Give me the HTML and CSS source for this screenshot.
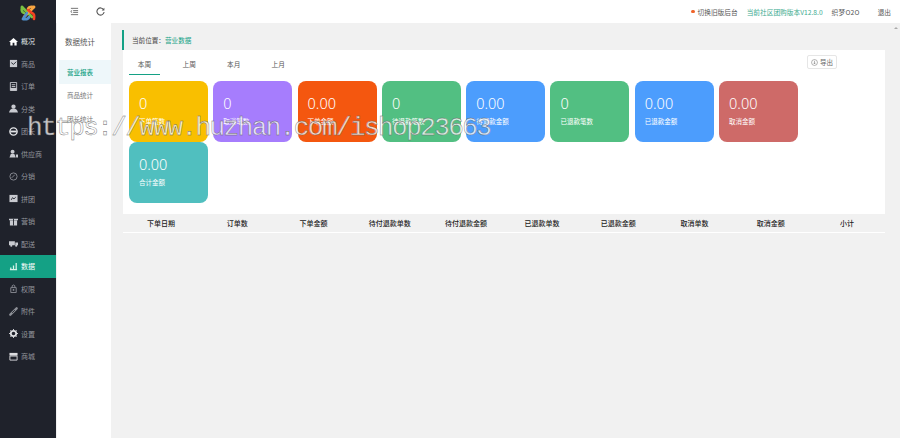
FILE: index.html
```html
<!DOCTYPE html>
<html lang="zh">
<head>
<meta charset="utf-8">
<title>数据统计</title>
<link rel="stylesheet" href="styles.css">
</head>
<body>
<div class="app">
  <aside class="side">
    <div class="logo">
      <svg width="18" height="18" viewBox="0 0 18 18" fill="none" stroke-width="2.6" stroke-linecap="round">
        <path d="M3 3 L13 13" stroke="#7ac143"/><path d="M3 3 Q2 8 5 9" stroke="#7ac143"/>
        <path d="M15 3 L5 13" stroke="#f9a541"/><path d="M15 3 Q10 2 9 5" stroke="#f9a541"/>
        <path d="M4 15 L8 9" stroke="#5091cd"/><path d="M4 15 Q9 16 10 13" stroke="#5091cd"/>
        <path d="M15 15 Q16 10 13 9 L9 6" stroke="#f44321"/>
      </svg>
    </div>
    <nav class="menu">
      <a class="item strong"><svg class="ic" viewBox="0 0 10 10"><path d="M5 1 L10 5.5 H8.5 V9.5 H6 V6.5 H4 V9.5 H1.5 V5.5 H0 Z" fill="#fff"/></svg>概况</a>
      <a class="item"><svg class="ic" viewBox="0 0 10 10"><path d="M1 1 H9 V9 H1 Z" fill="#c8cad0"/><path d="M2.5 4 L5 6 L8 3" stroke="#1f222b" fill="none"/></svg>商品</a>
      <a class="item"><svg class="ic" viewBox="0 0 10 10"><path d="M1.5 .5 H8.5 V9.5 H1.5 Z M3 3 H7 M3 5 H7" stroke="#c8cad0" fill="none"/><path d="M1.5 6.5 H8.5 V9.5 H1.5 Z" fill="#c8cad0"/></svg>订单</a>
      <a class="item"><svg class="ic" viewBox="0 0 10 10"><circle cx="5" cy="3" r="2.4" fill="#c8cad0"/><path d="M0 9.5 Q1 5 5 5 Q9 5 10 9.5 Z" fill="#c8cad0"/></svg>分类</a>
      <a class="item"><svg class="ic" viewBox="0 0 10 10"><circle cx="5" cy="5" r="4" fill="none" stroke="#e4e5e8" stroke-width="1.6"/><path d="M1.5 4 H8.5 V6 H1.5 Z" fill="#e4e5e8"/></svg>团长</a>
      <a class="item"><svg class="ic" viewBox="0 0 10 10"><circle cx="4" cy="3" r="2.2" fill="#c8cad0"/><path d="M.5 9.5 L2 5.5 H6 L7.5 9.5 Z M7.5 6 H10 V9.5 H8 Z" fill="#c8cad0"/></svg>供应商</a>
      <a class="item"><svg class="ic" viewBox="0 0 10 10"><circle cx="5" cy="5" r="4" fill="none" stroke="#8d9097"/><path d="M3 6.5 L6.5 3" stroke="#8d9097"/></svg>分销</a>
      <a class="item"><svg class="ic" viewBox="0 0 10 10"><path d="M.5 1 H9.5 V9 H.5 Z" fill="#c8cad0"/><path d="M2.5 6.5 L4 4 L5.5 5.5 L7.5 3.5" stroke="#1f222b" fill="none"/></svg>拼团</a>
      <a class="item"><svg class="ic" viewBox="0 0 10 10"><path d="M1 4 H9 V9.5 H1 Z M0 2 H10 V3.5 H0 Z" fill="#c8cad0"/><path d="M5 2 V9.5" stroke="#1f222b"/></svg>营销</a>
      <a class="item"><svg class="ic" viewBox="0 0 10 10"><path d="M0 2.5 H6.5 V7 H0 Z M7 4 H10 V7 H7 Z" fill="#c8cad0"/><circle cx="2.5" cy="7.5" r="1.2" fill="#c8cad0"/><circle cx="8" cy="7.5" r="1.2" fill="#c8cad0"/></svg>配送</a>
      <a class="item active"><svg class="ic" viewBox="0 0 10 10"><path d="M1 8.5 H9 M2 8 V6 M5 8 V4 M8 8 V1" stroke="#d6f3ea" stroke-width="1.4" fill="none"/></svg>数据</a>
      <a class="item"><svg class="ic" viewBox="0 0 10 10"><path d="M2 4 H8 V9.5 H2 Z M3.5 4 V2 Q5 .2 6.5 2 V4" stroke="#8d9097" fill="none"/><circle cx="5" cy="6.6" r="1" fill="#8d9097"/></svg>权限</a>
      <a class="item"><svg class="ic" viewBox="0 0 10 10"><path d="M1.5 8.5 L8.5 1.5" stroke="#8d9097" stroke-width="2.6" stroke-linecap="round"/><path d="M3.5 6.5 L6.5 3.5" stroke="#1f222b"/></svg>附件</a>
      <a class="item"><svg class="ic" viewBox="0 0 10 10"><circle cx="5" cy="5" r="3" fill="none" stroke="#dcdde0" stroke-width="2"/><path d="M5 0 V10 M0 5 H10 M1.5 1.5 L8.5 8.5 M8.5 1.5 L1.5 8.5" stroke="#dcdde0" stroke-dasharray="1.6 7"/></svg>设置</a>
      <a class="item"><svg class="ic" viewBox="0 0 10 10"><path d="M.5 1 H9.5 V4 H.5 Z" fill="#dcdde0"/><path d="M1 4.5 H9 V9 H1 Z" fill="none" stroke="#dcdde0"/></svg>商城</a>
    </nav>
  </aside>
  <div class="body">
    <header class="top">
      <div class="tools">
        <svg class="tool" viewBox="0 0 10 10"><path d="M1 1.5 H9 M3.5 4 H9 M3.5 6 H9 M1 8.5 H9 M2.4 3.7 L.8 5 L2.4 6.3" stroke="#555" fill="none" stroke-width=".9"/></svg>
        <svg class="tool" viewBox="0 0 10 10"><path d="M8.5 3 A4 4 0 1 0 9 5.5" stroke="#555" stroke-width="1.2" fill="none"/><path d="M9.3 .8 V3.8 H6.3 Z" fill="#555"/></svg>
      </div>
      <div class="links">
        <span class="switch"><i class="dot"></i>切换旧版后台</span>
        <span class="version">当前社区团购版本V12.8.0</span>
        <span class="brand">织梦O2O</span>
        <span class="quit">退出</span>
      </div>
    </header>
    <div class="lower">
      <aside class="sub">
        <div class="sub-title">数据统计</div>
        <a class="sub-item on">营业报表</a>
        <a class="sub-item">商品统计</a>
        <a class="sub-item">团长统计</a>
      </aside>
      <main class="main">
        <i class="scroll-up"></i>
        <div class="crumb">当前位置：<span class="crumb-link">营业数据</span></div>
        <section class="panel">
          <div class="tabs">
            <span class="tab on">本周</span>
            <span class="tab">上周</span>
            <span class="tab">本月</span>
            <span class="tab">上月</span>
            <span class="export"><svg class="export-ic" viewBox="0 0 10 10"><circle cx="5" cy="5" r="4.2" fill="none" stroke="#777" stroke-width=".8"/><path d="M5 2.5 V7 M3.4 5.4 L5 7 L6.6 5.4" stroke="#777" stroke-width=".8" fill="none"/></svg>导出</span>
          </div>
          <div class="cards">
            <div class="card yellow"><b>0</b><span>下单笔数</span></div>
            <div class="card purple"><b>0</b><span>取消笔数</span></div>
            <div class="card orange"><b>0.00</b><span>下单金额</span></div>
            <div class="card green"><b>0</b><span>待退款笔数</span></div>
            <div class="card blue"><b>0.00</b><span>待退款金额</span></div>
            <div class="card green"><b>0</b><span>已退款笔数</span></div>
            <div class="card blue"><b>0.00</b><span>已退款金额</span></div>
            <div class="card red"><b>0.00</b><span>取消金额</span></div>
            <div class="card teal"><b>0.00</b><span>合计金额</span></div>
          </div>
        </section>
        <div class="thead">
          <span>下单日期</span><span>订单数</span><span>下单金额</span><span>待付退款单数</span><span>待付退款金额</span><span>已退款单数</span><span>已退款金额</span><span>取消单数</span><span>取消金额</span><span>小计</span>
        </div>
      </main>
    </div>
  </div>
</div>
<div class="mark">https://www.huzhan.com/ishop23663</div>
</body>
</html>
```
FILE: styles.css
```css
* { box-sizing: border-box; }
html, body { margin: 0; height: 100%; overflow: hidden; }
body { font-family: "Noto Sans CJK SC", "Noto Sans", sans-serif; font-size: 7px; color: #333; background: #fff; }
.app { display: flex; height: 438px; }

.side { width: 56px; flex: none; background: #1f222b; }
.logo { height: 30px; display: flex; align-items: center; justify-content: center; padding-bottom: 4px; }
.menu { display: flex; flex-direction: column; }
.item { height: 22.5px; display: flex; align-items: center; gap: 3px; padding-left: 9px; font-size: 7px; color: #93959c; }
.item.strong { color: #dfe0e3; }
.item.active { background: #14a185; color: #fff; }
.ic { width: 9px; height: 9px; flex: none; }

.body { flex: 1; min-width: 0; display: flex; flex-direction: column; }
.top { height: 23px; flex: none; display: flex; align-items: center; justify-content: space-between; background: #fff; padding: 0 9px 0 14px; }
.tools { display: flex; align-items: center; gap: 17px; }
.tool { width: 9px; height: 9px; }
.links { display: flex; align-items: center; font-size: 6.7px; color: #555; }
.switch { display: flex; align-items: center; gap: 3px; margin-right: 9px; }
.dot { width: 3.5px; height: 3.5px; border-radius: 50%; background: #f0642a; }
.version { color: #3cab8f; margin-right: 9px; }
.brand { margin-right: 18px; letter-spacing: .2px; }

.lower { flex: 1; display: flex; min-height: 0; }
.sub { width: 55px; flex: none; background: #fff; padding-left: 2px; border-left: 1px solid #f0f0f0; }
.sub-title { height: 37px; padding: 13px 0 0 6px; font-size: 7.5px; line-height: 12px; color: #555; }
.sub-item { height: 23.5px; display: flex; align-items: center; padding-left: 8px; font-size: 6.5px; color: #777; }
.sub-item.on { background: #eef7fa; color: #13a184; font-weight: 500; }

.main { position: relative; flex: 1; min-width: 0; background: #f1f1f1; padding: 7px 15px 0 11px; }
.scroll-up { position: absolute; right: 2px; top: 4px; border: 2px solid transparent; border-top-width: 0; border-bottom: 2px solid #aaa; }
.crumb { height: 20px; display: flex; align-items: center; border-left: 2px solid #14a185; padding-left: 8px; font-size: 6.6px; color: #444; }
.crumb-link { color: #14a185; }
.panel { margin-left: 1px; background: #fff; height: 164px; padding: 0 6px; }
.tabs { position: relative; display: flex; height: 31px; }
.tab { width: 44.5px; padding-top: 9px; text-align: center; font-size: 6.7px; color: #555; }
.tab.on { width: 31px; height: 25px; border-bottom: 1px solid #14a185; margin-right: 7px; }
.export { position: absolute; right: 42px; top: 5px; width: 30px; height: 14px; display: flex; align-items: center; justify-content: center; gap: 2px; border: 1px solid #e6e6e6; border-radius: 2px; font-size: 6.5px; color: #666; }
.export-ic { width: 7px; height: 7px; }
.cards { display: flex; flex-wrap: wrap; }
.card { width: 79px; height: 61px; margin-right: 5.3px; border-radius: 8px; padding: 12px 10px 0; color: #fff; display: flex; flex-direction: column; }
.card b { font-weight: 300; font-size: 14.5px; line-height: 20px; font-family: "Noto Sans", sans-serif; }
.card span { margin-top: 2.5px; font-size: 6.5px; line-height: 10px; }
.yellow { background: #f9bf00; }
.purple { background: #a67dfd; }
.orange { background: #f4570f; }
.green { background: #52bf82; }
.blue { background: #4c9dfd; }
.red { background: #ce6a68; }
.teal { background: #50bfbf; }

.thead { margin-left: 1px; height: 19px; display: grid; grid-template-columns: repeat(10, 1fr); align-items: center; text-align: center; border-bottom: 1px solid #fff; font-size: 7px; font-weight: 500; color: #222; }

.mark { position: absolute; left: 27px; top: 112px; font-family: "Liberation Mono", monospace; font-size: 26px; letter-spacing: -1.56px; line-height: 32px; white-space: nowrap; color: rgba(255,255,255,.75); -webkit-text-stroke: .4px #666; }
```
